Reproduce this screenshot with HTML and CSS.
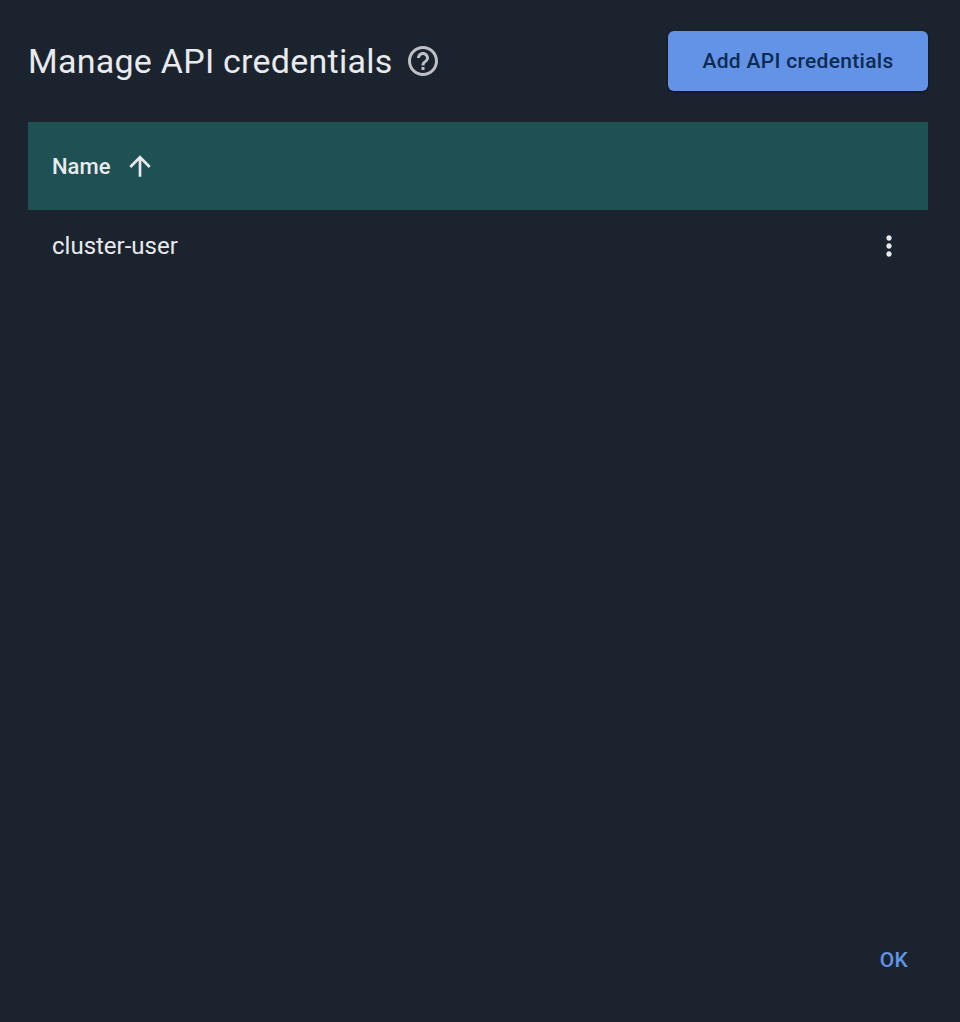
FILE: index.html
```html
<!DOCTYPE html>
<html lang="en">
<head>
<meta charset="utf-8">
<title>Manage API credentials</title>
<link rel="stylesheet" href="styles.css">
</head>
<body>
<div class="dialog">
  <header class="head">
    <div class="title-wrap">
      <h1 class="title">Manage API credentials</h1>
      <svg class="help" viewBox="0 0 24 24" width="36" height="36"><path fill="currentColor" d="M11 18h2v-2h-2v2zm1-16C6.48 2 2 6.48 2 12s4.48 10 10 10 10-4.48 10-10S17.52 2 12 2zm0 18c-4.41 0-8-3.59-8-8s3.59-8 8-8 8 3.59 8 8-3.59 8-8 8zm0-14c-2.21 0-4 1.79-4 4h2c0-1.1.9-2 2-2s2 .9 2 2c0 2-3 1.75-3 5h2c0-2.25 3-2.5 3-5 0-2.21-1.79-4-4-4z"/></svg>
    </div>
    <button class="primary">Add API credentials</button>
  </header>
  <div class="table">
    <div class="thead">
      <span>Name</span>
      <svg class="sort" viewBox="0 0 24 24" width="32" height="32"><path fill="currentColor" d="M4 12l1.41 1.41L11 7.83V20h2V7.83l5.58 5.59L20 12l-8-8-8 8z"/></svg>
    </div>
    <div class="row">
      <span>cluster-user</span>
      <svg class="more" viewBox="0 0 24 24" width="32" height="32"><path fill="currentColor" d="M12 8c1.1 0 2-.9 2-2s-.9-2-2-2-2 .9-2 2 .9 2 2 2zm0 2c-1.1 0-2 .9-2 2s.9 2 2 2 2-.9 2-2-.9-2-2-2zm0 6c-1.1 0-2 .9-2 2s.9 2 2 2 2-.9 2-2-.9-2-2-2z"/></svg>
    </div>
  </div>
  <footer class="foot"><button class="ok">OK</button></footer>
</div>
</body>
</html>
```
FILE: styles.css
```css
* { box-sizing: border-box; }
html, body { margin: 0; height: 100%; }
body { background: #1b232e; color: #e8eaed; font-family: Roboto, "Liberation Sans", sans-serif; }
.dialog { height: 1022px; padding: 31px 32px 0 28px; display: flex; flex-direction: column; }
.head { display: flex; justify-content: space-between; align-items: center; height: 60px; }
.title-wrap { display: flex; align-items: center; gap: 12px; }
.title { margin: 0; font-size: 34px; font-weight: 400; letter-spacing: 0.25px; color: #e8eaed; }
.help { color: #bdc1c6; }
.primary { width: 260px; height: 60px; border: 0; border-radius: 6px; background: #6393e6; color: #0d2b52; font: 500 21px Roboto, "Liberation Sans", sans-serif; letter-spacing: 0.3px; box-shadow: 0 1px 3px rgba(0,0,0,.5); }
.table { margin-top: 31px; flex: 1; }
.thead { height: 88px; background: #1f5053; display: flex; align-items: center; gap: 14px; padding-left: 24px; font-size: 22px; font-weight: 500; color: #e8eaed; }
.row { height: 72px; display: flex; align-items: center; justify-content: space-between; padding: 0 23px 0 24px; font-size: 24px; }
.more { color: #e8eaed; }
.foot { display: flex; justify-content: flex-end; height: 83px; }
.ok { background: none; border: 0; padding: 0; color: #6393e6; font: 500 21px Roboto, "Liberation Sans", sans-serif; width: 60px; height: 42px; margin-right: 4px; letter-spacing: 0.3px; }
```
